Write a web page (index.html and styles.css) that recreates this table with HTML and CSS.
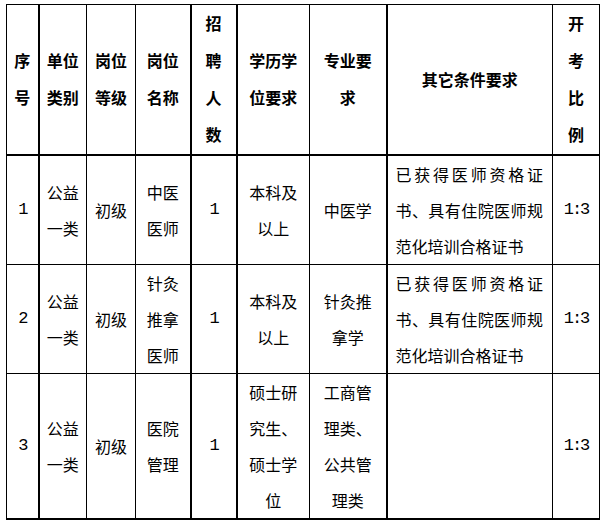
FILE: index.html
```html
<!DOCTYPE html>
<html lang="zh-CN">
<head>
<meta charset="utf-8">
<link rel="stylesheet" href="styles.css">
</head>
<body>
<table class="grid">
  <colgroup>
    <col class="w1"><col class="w2"><col class="w3"><col class="w4"><col class="w5"><col class="w6"><col class="w7"><col class="w8"><col class="w9">
  </colgroup>
  <thead>
    <tr class="head">
      <th class="thick">序<br>号</th>
      <th>单位<br>类别</th>
      <th>岗位<br>等级</th>
      <th class="thick">岗位<br>名称</th>
      <th class="thick">招<br>聘<br>人<br>数</th>
      <th>学历学<br>位要求</th>
      <th class="thick">专业要<br>求</th>
      <th>其它条件要求</th>
      <th>开<br>考<br>比<br>例</th>
    </tr>
  </thead>
  <tbody>
    <tr class="row3">
      <td class="thick num">1</td>
      <td>公益<br>一类</td>
      <td>初级</td>
      <td class="thick">中医<br>医师</td>
      <td class="thick num">1</td>
      <td>本科及<br>以上</td>
      <td class="thick">中医学</td>
      <td class="long"><span class="jl">已获得医师资格证</span><span class="jl">书、具有住院医师规</span><span class="ln">范化培训合格证书</span></td>
      <td class="num">1:3</td>
    </tr>
    <tr class="row3">
      <td class="thick num">2</td>
      <td>公益<br>一类</td>
      <td>初级</td>
      <td class="thick">针灸<br>推拿<br>医师</td>
      <td class="thick num">1</td>
      <td>本科及<br>以上</td>
      <td class="thick">针灸推<br>拿学</td>
      <td class="long"><span class="jl">已获得医师资格证</span><span class="jl">书、具有住院医师规</span><span class="ln">范化培训合格证书</span></td>
      <td class="num">1:3</td>
    </tr>
    <tr class="row4">
      <td class="thick num">3</td>
      <td>公益<br>一类</td>
      <td>初级</td>
      <td class="thick">医院<br>管理</td>
      <td class="thick num">1</td>
      <td>硕士研<br>究生、<br>硕士学<br>位</td>
      <td class="thick">工商管<br>理类、<br>公共管<br>理类</td>
      <td class="long"></td>
      <td class="num">1:3</td>
    </tr>
  </tbody>
</table>
</body>
</html>
```

FILE: styles.css
```css
html, body {
  margin: 0;
  padding: 0;
  background: #ffffff;
}

body {
  padding: 4px 0 0 6px;
  font-family: "Noto Sans CJK SC", "Noto Sans", sans-serif;
  font-size: 16px;
  color: #000000;
}

.grid {
  border-collapse: collapse;
  table-layout: fixed;
  width: 593px;
}

.w1 { width: 32px; }
.w2 { width: 48px; }
.w3 { width: 49px; }
.w4 { width: 55px; }
.w5 { width: 46px; }
.w6 { width: 73px; }
.w7 { width: 77px; }
.w8 { width: 166px; }
.w9 { width: 47px; }

.grid th,
.grid td {
  border: 1px solid #000000;
  padding: 0;
  text-align: center;
  vertical-align: middle;
  line-height: 36px;
}

.grid th {
  font-weight: 700;
  line-height: 37px;
}

.grid .thick {
  border-right-width: 2px;
}

.grid thead th {
  border-bottom-width: 2px;
}

.grid tbody tr:last-child td {
  border-bottom-width: 2px;
}

.head { height: 150px; }
.row3 { height: 109px; }
.row4 { height: 145px; }

.grid .num {
  font-family: "Liberation Mono", monospace;
  font-size: 17px;
  letter-spacing: -2px;
}

.grid .long {
  text-align: left;
  padding: 0 9px 0 8px;
}

.jl,
.ln {
  display: block;
}

.jl {
  text-align: justify;
  text-align-last: justify;
}
```
